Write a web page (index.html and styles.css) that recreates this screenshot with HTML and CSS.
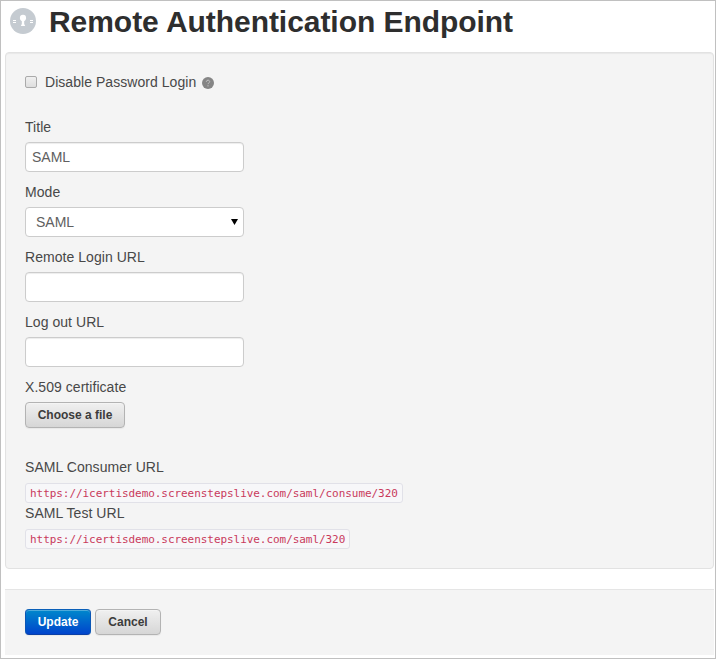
FILE: index.html
```html
<!DOCTYPE html>
<html lang="en">
<head>
<meta charset="utf-8">
<title>Remote Authentication Endpoint</title>
<link rel="stylesheet" href="styles.css">
</head>
<body>
<main class="page">
  <header class="header">
    <svg class="lock" viewBox="0 0 26 26" width="26" height="26" aria-hidden="true">
      <circle cx="13" cy="13" r="13" fill="#c5cbd1"/>
      <circle cx="13" cy="9.9" r="3.1" fill="#fff"/>
      <path d="M11.8 11h2.4v5l1 2h-4.4l1-2z" fill="#fff"/>
      <path d="M3 12.5h3M3 14.5h3M20 12.5h3M20 14.5h3" stroke="#fff" stroke-width="1"/>
    </svg>
    <h1 class="heading">Remote Authentication Endpoint</h1>
  </header>
  <form class="form">
    <section class="panel">
      <label class="check-row">
        <input class="check" type="checkbox">
        <span class="check-text">Disable Password Login</span>
        <svg class="help" viewBox="0 0 12 12" width="12" height="12" aria-hidden="true">
          <circle cx="6" cy="6" r="6" fill="#858585"/>
          <path d="M4.3 4.8C4.3 2.6 7.7 2.7 7.7 4.7C7.7 5.9 6 5.8 6 7.2M6 8.2v1.2" fill="none" stroke="#c4c4c4" stroke-width="1"/>
        </svg>
      </label>
      <label class="label" for="title">Title</label>
      <input class="field" id="title" type="text" value="SAML">
      <label class="label" for="mode">Mode</label>
      <div class="select">
        <select class="field field-select" id="mode"><option>SAML</option></select>
        <svg class="arrow" viewBox="0 0 7 6" width="7" height="6" aria-hidden="true"><path d="M0 0h7L3.5 6z" fill="#000"/></svg>
      </div>
      <label class="label" for="login">Remote Login URL</label>
      <input class="field" id="login" type="text">
      <label class="label" for="logout">Log out URL</label>
      <input class="field" id="logout" type="text">
      <div class="label">X.509 certificate</div>
      <button class="btn btn-file" type="button">Choose a file</button>
      <div class="url-label">SAML Consumer URL</div>
      <code class="code">https://icertisdemo.screenstepslive.com/saml/consume/320</code>
      <div class="url-label">SAML Test URL</div>
      <code class="code">https://icertisdemo.screenstepslive.com/saml/320</code>
    </section>
    <footer class="actions">
      <button class="btn btn-primary" type="button">Update</button>
      <button class="btn btn-cancel" type="button">Cancel</button>
    </footer>
  </form>
</main>
</body>
</html>
```
FILE: styles.css
```css
* { box-sizing: border-box; }
body {
  margin: 0;
  background: #fff;
  color: #484848;
  font: 14px/20px "Liberation Sans", Arial, sans-serif;
  letter-spacing: .05px;
}
.page {
  height: 659px;
  overflow: hidden;
  border: 1px solid #c0c0c0;
  padding: 0 1px 0 4px;
}
.header {
  display: flex;
  align-items: center;
  height: 51px;
  padding: 0 0 11px 5px;
}
.lock { flex: none; }
.heading {
  margin: 1px 0 0 13px;
  color: #2e2e2e;
  font-size: 30px;
  line-height: 40px;
  letter-spacing: -.05px;
  white-space: nowrap;
}
.panel {
  display: flex;
  flex-direction: column;
  align-items: flex-start;
  width: 709px;
  height: 517px;
  padding: 19px;
  background: #f4f4f4;
  border: 1px solid #e2e2e2;
  border-radius: 4px;
  box-shadow: inset 0 1px 1px rgba(0, 0, 0, .05);
}
.panel > * { flex-shrink: 0; }
.check-row {
  display: flex;
  align-items: center;
  height: 20px;
  margin-bottom: 25px;
}
.check {
  appearance: none;
  width: 12px;
  height: 12px;
  margin: 0 8px 0 0;
  border: 1px solid #aaa;
  border-radius: 2px;
  background: linear-gradient(#f0f0f0, #dedede);
}
.help { margin: 2px 0 0 6px; }
.label { height: 20px; margin-bottom: 5px; }
.field {
  width: 219px;
  height: 30px;
  margin: 0 0 10px;
  padding: 4px 6px;
  border: 1px solid #ccc;
  border-radius: 4px;
  background: #fff;
  box-shadow: inset 0 1px 1px rgba(0, 0, 0, .075);
  color: #606060;
  font: inherit;
}
.select { position: relative; height: 40px; }
.field-select {
  display: block;
  appearance: none;
  padding: 4px 10px;
  box-shadow: none;
}
.arrow { position: absolute; right: 6px; top: 12px; }
.btn {
  height: 26px;
  padding: 0;
  border: 1px solid #b3b3b3;
  border-radius: 4px;
  background: linear-gradient(#f0f0f0, #d6d6d6);
  box-shadow: inset 0 1px 0 rgba(255, 255, 255, .3), 0 1px 1px rgba(0, 0, 0, .05);
  color: #3c3c3c;
  font: bold 12px/20px "Liberation Sans", Arial, sans-serif;
}
.btn-file { width: 100px; margin-bottom: 29px; }
.url-label { height: 20px; }
.code {
  height: 20px;
  margin: 6px 0 0;
  padding: 0 4px;
  border: 1px solid #e1e1e8;
  border-radius: 3px;
  background: #f7f7f9;
  color: #c93a5c;
  font: 11px/19px "DejaVu Sans Mono", monospace;
  letter-spacing: -.055px;
  white-space: nowrap;
}
.actions {
  display: flex;
  gap: 4px;
  height: 66px;
  margin-top: 20px;
  padding: 19px 20px 0;
  border-top: 1px solid #e5e5e5;
  background: #f4f4f4;
}
.btn-primary {
  width: 66px;
  border-color: #0a5fb8 #0a56b5 #0a3fa5;
  background: linear-gradient(#0088cc, #0044cc);
  color: #fff;
}
.btn-cancel { width: 66px; }
```
